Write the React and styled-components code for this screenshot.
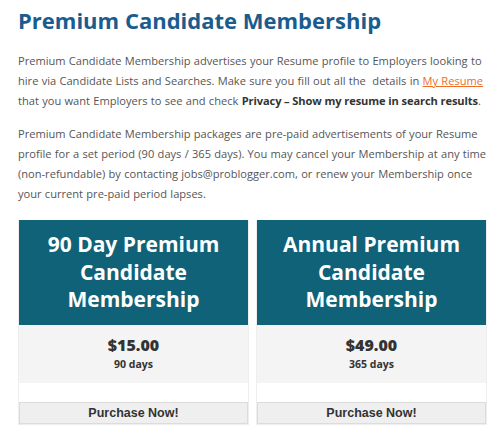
import React from "react"
import styled, { createGlobalStyle } from "styled-components"

const GlobalStyle = createGlobalStyle`
  body {
    margin: 0;
    background: #fff;
    font-family: "Open Sans", sans-serif;
  }
`

const Page = styled.div`
  padding: 0 13px 0 18px;
`

const Title = styled.h1`
  margin: 5px 0 16px;
  font-size: 22px;
  line-height: 30px;
  font-weight: 700;
  color: #1b5c8e;
`

const Text = styled.p`
  margin: 0 0 13px;
  font-size: 11.1px;
  line-height: 20px;
  word-spacing: 0.4px;
  color: #555;
  a {
    color: #f26b2a;
    text-decoration: underline;
  }
  strong {
    color: #333;
    letter-spacing: -0.1px;
    word-spacing: 0;
  }
`

const Plans = styled.div`
  display: grid;
  grid-template-columns: 1fr 1fr;
  gap: 7px;
  margin-top: 16px;
`

const Plan = styled.div`
  border: 1px solid #eee;
  border-top: none;
`

const PlanHeader = styled.div`
  background: #0f6278;
  color: #fff;
  text-align: center;
  font-size: 21px;
  line-height: 27.5px;
  font-weight: 700;
  padding: 11px 10px 11px;
`

const PlanPrice = styled.div`
  background: #f4f4f4;
  text-align: center;
  color: #333;
  font-weight: 700;
  height: 58px;
  display: flex;
  flex-direction: column;
  justify-content: center;
  strong {
    font-size: 16px;
    line-height: 21px;
  }
  span {
    font-size: 10.5px;
    line-height: 16px;
  }
`

const Spacer = styled.div`
  height: 19px;
`

const Purchase = styled.button`
  display: block;
  width: 100%;
  height: 22px;
  padding: 0;
  border: 1px solid #dcdcdc;
  background: #efefef;
  color: #333;
  font-family: "Liberation Sans", Arial, sans-serif;
  font-weight: 700;
  font-size: 12.5px;
`

const plans = [
  { title: "90 Day Premium Candidate Membership", price: "$15.00", period: "90 days" },
  { title: "Annual Premium Candidate Membership", price: "$49.00", period: "365 days" },
]

export default function App() {
  return (
    <Page>
      <GlobalStyle />
      <Title>Premium Candidate Membership</Title>
      <Text>
        Premium Candidate Membership advertises your Resume profile to Employers looking to
        hire via Candidate Lists and Searches. Make sure you fill out all the&nbsp; details in{" "}
        <a href="#">My Resume</a> that you want Employers to see and check{" "}
        <strong>Privacy – Show my resume in search results</strong>.
      </Text>
      <Text>
        Premium Candidate Membership packages are pre-paid advertisements of your Resume
        profile for a set period (90 days / 365 days). You may cancel your Membership at any
        time (non-refundable) by contacting jobs@problogger.com, or renew your Membership once
        your current pre-paid period lapses.
      </Text>
      <Plans>
        {plans.map((p) => (
          <Plan key={p.price}>
            <PlanHeader>{p.title}</PlanHeader>
            <PlanPrice>
              <strong>{p.price}</strong>
              <span>{p.period}</span>
            </PlanPrice>
            <Spacer />
            <Purchase>Purchase Now!</Purchase>
          </Plan>
        ))}
      </Plans>
    </Page>
  )
}
